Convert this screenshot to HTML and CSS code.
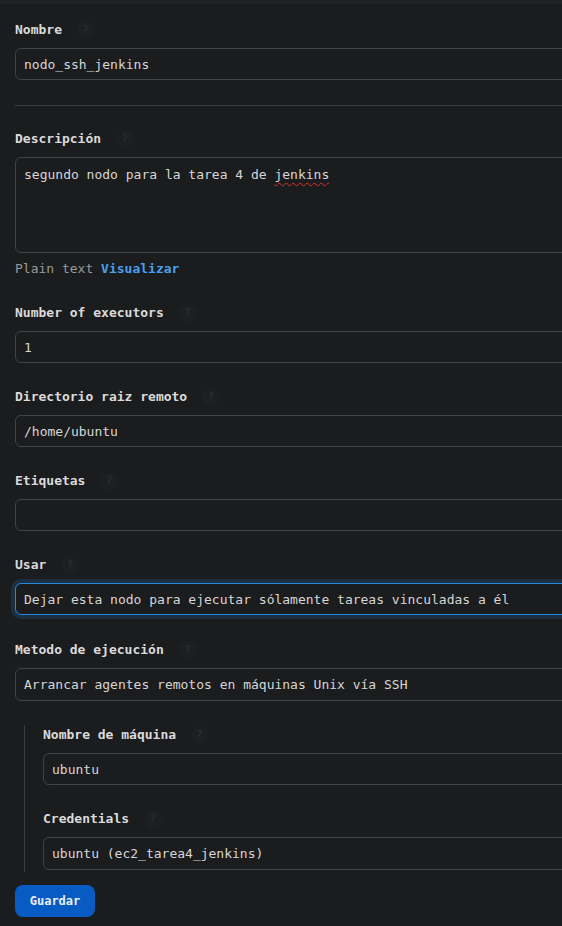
FILE: index.html
```html
<!DOCTYPE html>
<html lang="es">
<head>
<meta charset="utf-8">
<title>nodo_ssh_jenkins</title>
<link rel="stylesheet" href="styles.css">
</head>
<body>
<div class="topbar"></div>
<form class="page">
  <div class="field">
    <div class="label">Nombre <span class="help">?</span></div>
    <input class="control" type="text" value="nodo_ssh_jenkins">
  </div>
  <hr class="divider">
  <div class="field field-desc">
    <div class="label">Descripción <span class="help">?</span></div>
    <div class="control textarea">segundo nodo para la tarea 4 de <span class="misspelled">jenkins</span></div>
    <div class="preview">Plain text <a class="link">Visualizar</a></div>
  </div>
  <div class="field">
    <div class="label">Number of executors <span class="help">?</span></div>
    <input class="control" type="text" value="1">
  </div>
  <div class="field">
    <div class="label">Directorio raiz remoto <span class="help">?</span></div>
    <input class="control" type="text" value="/home/ubuntu">
  </div>
  <div class="field">
    <div class="label">Etiquetas <span class="help">?</span></div>
    <input class="control" type="text" value="">
  </div>
  <div class="field field-focus">
    <div class="label">Usar <span class="help">?</span></div>
    <div class="control select focused">Dejar esta nodo para ejecutar sólamente tareas vinculadas a él</div>
  </div>
  <div class="field">
    <div class="label">Metodo de ejecución <span class="help">?</span></div>
    <div class="control select tall">Arrancar agentes remotos en máquinas Unix vía SSH</div>
  </div>
  <div class="nested">
    <div class="field">
      <div class="label">Nombre de máquina <span class="help">?</span></div>
      <input class="control" type="text" value="ubuntu">
    </div>
    <div class="field">
      <div class="label">Credentials <span class="help">?</span></div>
      <div class="control select tall">ubuntu (ec2_tarea4_jenkins)</div>
    </div>
  </div>
</form>
<div class="footer">
  <button class="btn-primary" type="button">Guardar</button>
</div>
</body>
</html>
```
FILE: styles.css
```css
html, body {
  margin: 0;
  padding: 0;
  background: #1b1c1e;
  overflow: hidden;
  height: 100%;
}
body {
  font-family: "DejaVu Sans Mono", "Liberation Mono", monospace;
  font-size: 13px;
  color: #d9d9d9;
}
.topbar {
  height: 4px;
  background: #202326;
}
.page {
  width: 640px;
  padding: 16px 0 0 15px;
  display: flex;
  flex-direction: column;
}
.field {
  display: flex;
  flex-direction: column;
  margin-bottom: 24px;
}
.field-focus {
  margin-bottom: 25px;
}
.label {
  display: flex;
  align-items: center;
  gap: 7px;
  height: 20px;
  line-height: 20px;
  font-weight: bold;
  color: #dadada;
  margin-bottom: 8px;
  white-space: pre;
}
.help {
  display: inline-flex;
  align-items: center;
  justify-content: center;
  width: 18px;
  height: 18px;
  border-radius: 50%;
  background: #1d1f21;
  color: #2a2d31;
  font-size: 11px;
  font-weight: bold;
}
.control {
  box-sizing: border-box;
  width: 100%;
  height: 32px;
  margin: 0;
  padding: 0 8px;
  border: 1px solid #404245;
  border-radius: 6px;
  background: #1b1c1e;
  color: #d6d6d6;
  font-family: inherit;
  font-size: 13px;
  outline: none;
}
.select {
  display: flex;
  align-items: center;
  white-space: pre;
}
.tall {
  height: 33px;
}
.focused {
  border-color: #2389e0;
  box-shadow: 0 0 0 4px rgba(30, 136, 229, 0.18);
}
.divider {
  margin: 1px 0 23px 0;
  height: 0;
  border: none;
  border-top: 1px solid #3c3e41;
}
.field-desc {
  margin-bottom: 22px;
}
.textarea {
  height: 96px;
  padding: 7px 8px;
  line-height: 20px;
}
.misspelled {
  text-decoration: underline wavy #d8322e;
  text-decoration-skip-ink: none;
  text-underline-offset: 3px;
  text-decoration-thickness: 1px;
}
.preview {
  margin-top: 4px;
  height: 24px;
  line-height: 24px;
  color: #9a9a9a;
}
.link {
  color: #4aa0ec;
  font-weight: bold;
}
.nested {
  margin-left: 9px;
  border-left: 1px solid #3a3c3f;
  padding-left: 18px;
  display: flex;
  flex-direction: column;
}
.footer {
  position: fixed;
  left: 0;
  right: 0;
  bottom: 0;
  height: 54px;
  box-sizing: border-box;
  padding: 13px 15px;
  background: #1b1c1e;
}
.btn-primary {
  width: 80px;
  height: 32px;
  border: none;
  border-radius: 8px;
  background: #085bc2;
  color: #e8eef8;
  font-family: "DejaVu Sans Mono", "Liberation Mono", monospace;
  font-size: 12px;
  font-weight: bold;
  padding: 0;
}
```
